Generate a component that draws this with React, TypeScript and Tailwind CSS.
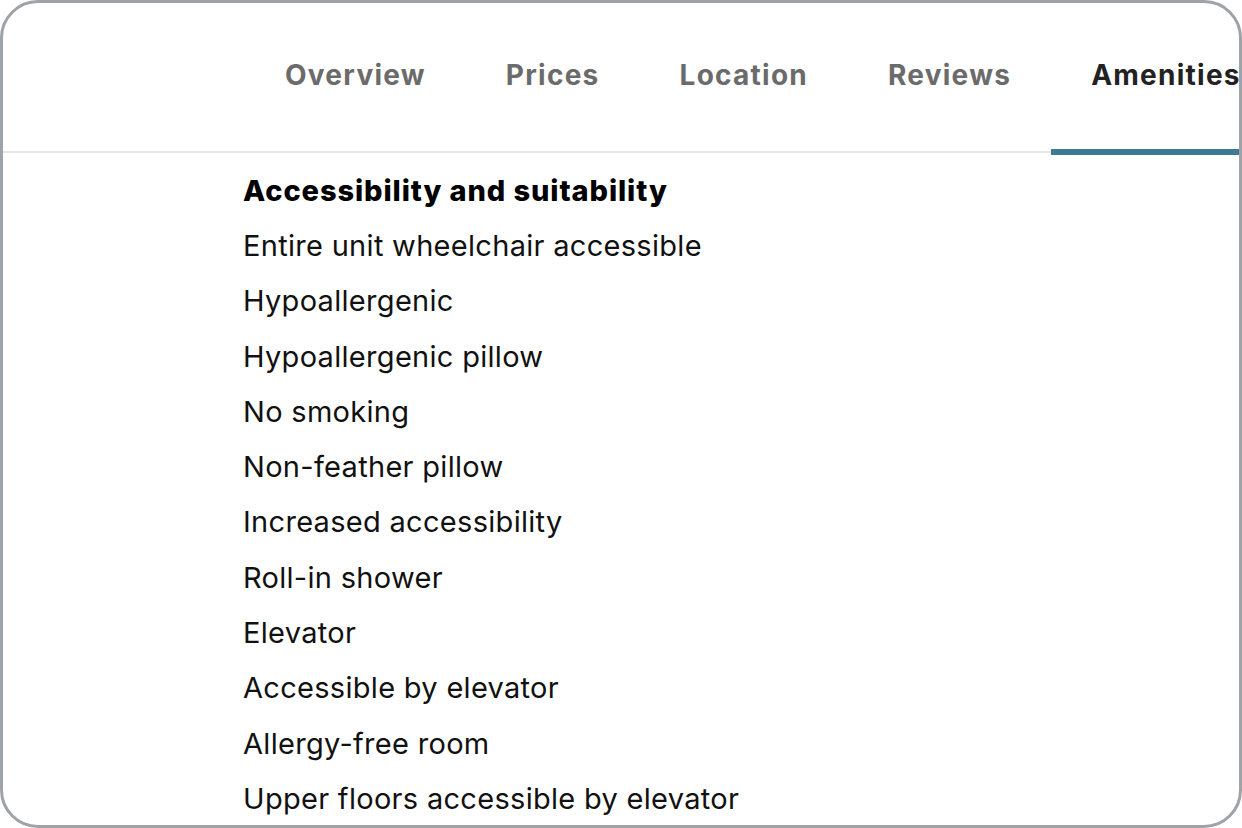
const TABS = ['Overview', 'Prices', 'Location', 'Reviews', 'Amenities'];

const ITEMS = [
  'Entire unit wheelchair accessible',
  'Hypoallergenic',
  'Hypoallergenic pillow',
  'No smoking',
  'Non-feather pillow',
  'Increased accessibility',
  'Roll-in shower',
  'Elevator',
  'Accessible by elevator',
  'Allergy-free room',
  'Upper floors accessible by elevator',
];

export default function App() {
  return (
    <div className="w-[1242px] h-[828px] bg-white font-['Inter',sans-serif]">
      <div className="w-full h-full border-[3px] border-[#9ea3a8] rounded-[38px] overflow-hidden">
        {/* tab bar */}
        <nav className="relative h-[150px] flex pl-[242px] whitespace-nowrap">
          <div className="absolute left-0 right-0 bottom-0 h-[2px] bg-[#e6e7e8]" />
          {TABS.map((tab) => {
            const active = tab === 'Amenities';
            return (
              <div
                key={tab}
                className={`relative shrink-0 px-10 pt-[50px] text-[28px] font-bold tracking-[1.25px] leading-[44px] ${
                  active ? 'text-[#222]' : 'text-[#6b6b6b]'
                }`}
              >
                {tab}
                {active && <div className="absolute left-0 right-0 -bottom-[2px] h-[6px] bg-[#3f7a92]" />}
              </div>
            );
          })}
        </nav>

        {/* amenities list */}
        <div className="pl-[240px] pt-[10px] text-[#111]">
          <h3 className="text-[29px] font-extrabold tracking-[0.9px] leading-[55px] text-black">
            Accessibility and suitability
          </h3>
          <ul>
            {ITEMS.map((item) => (
              <li key={item} className="text-[29px] tracking-[0.3px] leading-[55.3px]">
                {item}
              </li>
            ))}
          </ul>
        </div>
      </div>
    </div>
  );
}
